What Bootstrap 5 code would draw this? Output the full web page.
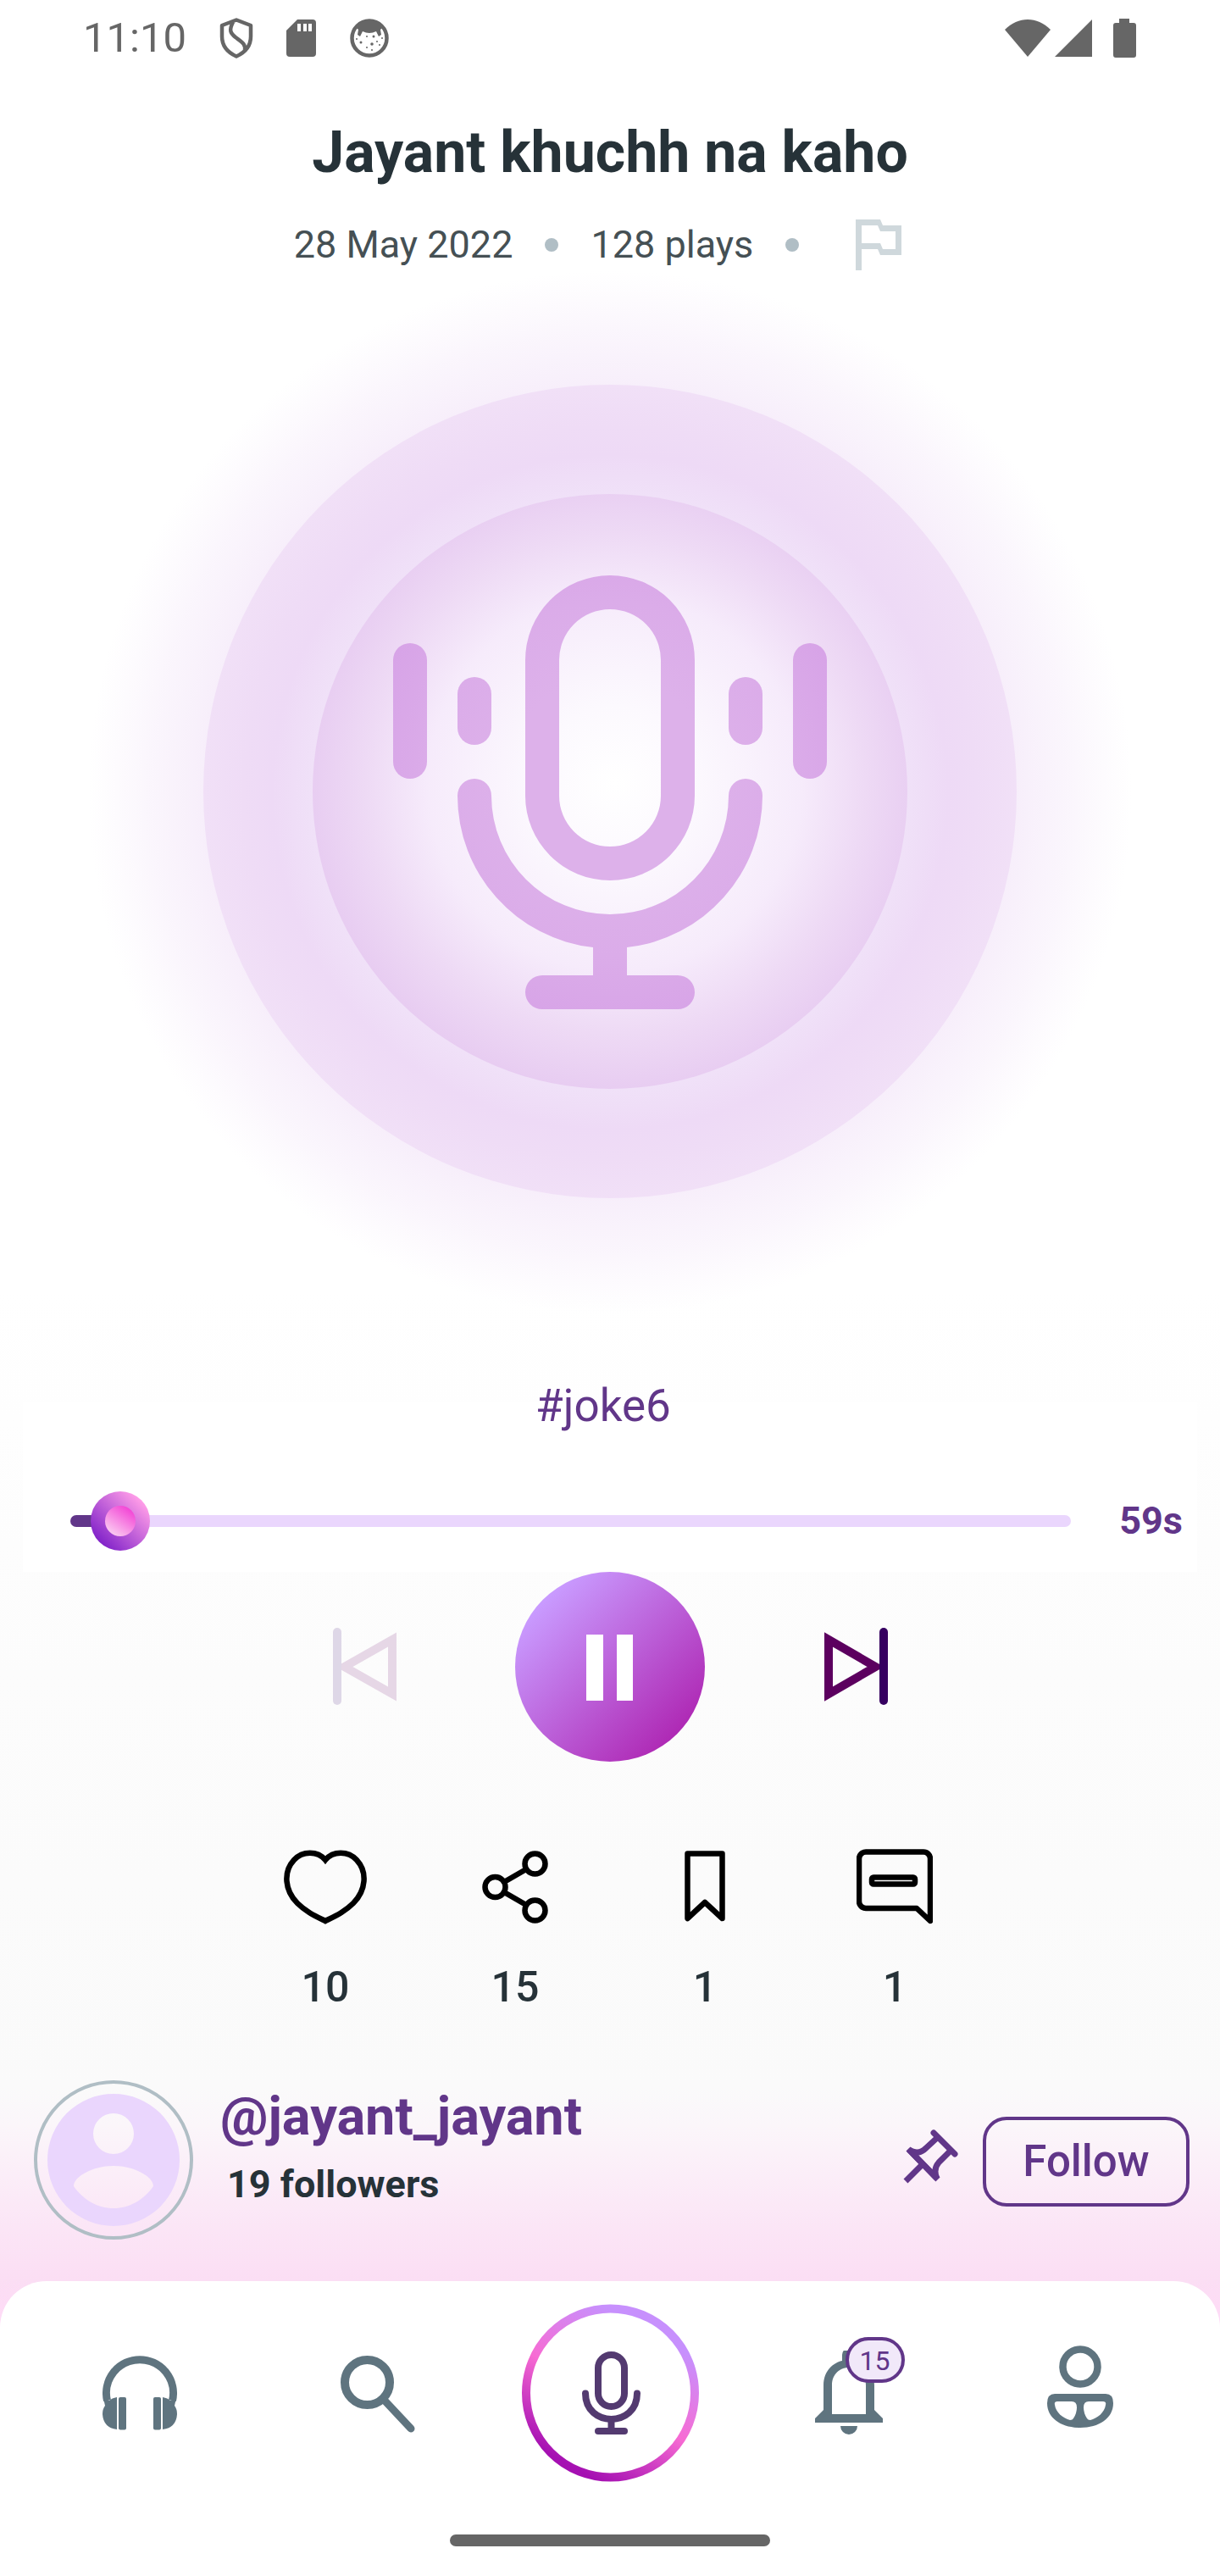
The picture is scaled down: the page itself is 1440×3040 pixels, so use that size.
<!DOCTYPE html>
<html lang="en">
<head>
<meta charset="utf-8">
<meta name="viewport" content="width=device-width, initial-scale=1">
<title>Jayant khuchh na kaho</title>
<link href="https://cdn.jsdelivr.net/npm/bootstrap@5.3.0/dist/css/bootstrap.min.css" rel="stylesheet">
<style>
  :root { --violet: #613689; --ink: #263238; --slate: #5f747f; --lilac: #ead6fd; --status: #666; }
  body {
    font-family: Roboto, "Liberation Sans", sans-serif;
    color: var(--ink);
    background: linear-gradient(#fff 0, #fff 50%, #fcfcfc 65%, #fafafa 81%, #fbf6fa 82.5%, #fbe9f7 85.5%, #fbdef4 88.5%, #ffdaf7 90.5%) #fff;
  }
  svg { display: block; flex: none; }
  .icon-btn { background: none; border: 0; padding: 0; color: inherit; display: block; }
  .status-bar { height: 90px; padding: 0 98px 0 98px; color: var(--status); font-size: 49px; line-height: 60px; }
  .status-icons { gap: 39px; }
  .signal-icons { gap: 5px; }
  .track-title { font-size: 68px; line-height: 80px; font-weight: 700; margin: 50px 0 39px; }
  .track-meta { font-size: 45px; line-height: 60px; gap: 38px; color: #455054; }
  .dot { width: 16px; height: 16px; border-radius: 50%; background: #b0bec5; }
  .flag-btn { width: 112px; }
  .artwork { max-width: 1232px; }
  .player { margin: 76px 27px 0; background: linear-gradient(transparent 28px, #fff 28px); }
  .hashtag { font-size: 53px; line-height: 64px; color: var(--violet); text-decoration: none; }
  .seek-row { gap: 57px; padding: 69px 17px 25px 56px; }
  .seek { appearance: none; -webkit-appearance: none; height: 70px; margin: 0; background: none; min-width: 0; }
  .seek::-webkit-slider-runnable-track {
    height: 14px; border-radius: 7px;
    background: linear-gradient(90deg, var(--violet) var(--played), var(--lilac) var(--played));
  }
  .seek::-webkit-slider-thumb {
    -webkit-appearance: none; width: 70px; height: 70px; margin-top: -28px; padding: 17px; border: 0; border-radius: 50%;
    background: linear-gradient(35deg, #fbd0f2 10%, #f348d6 85%) content-box, linear-gradient(45deg, #7d1fc8 12%, #ff9de8 85%) border-box;
  }
  .time-left { font-size: 45px; line-height: 60px; font-weight: 700; color: var(--violet); }
  .controls { gap: 140px; }
  .play-btn { width: 224px; height: 224px; border-radius: 50%; background: linear-gradient(135deg, #c99bff 15%, #ad22b0 90%); }
  .actions { margin-top: 100px; }
  .action { width: 224px; font-size: 50px; line-height: 60px; font-weight: 500; gap: 40px; }
  .author { margin-top: 80px; padding: 0 36px 0 40px; gap: 32px; }
  .avatar { width: 188px; height: 188px; border: 4px solid #b0bec5; border-radius: 50%; }
  .handle { font-size: 63px; line-height: 72px; font-weight: 700; color: var(--violet); text-decoration: none; margin-bottom: 14px; }
  .followers { font-size: 45px; line-height: 60px; font-weight: 700; }
  .author-text { padding-bottom: 28px; }
  .pin-btn { color: var(--violet); margin-bottom: 12px; }
  .follow-btn { width: 244px; height: 106px; border: 4px solid var(--violet); border-radius: 28px; font-size: 51px; font-weight: 500; color: var(--violet); background: none; }
  .author-tools { gap: 27px; padding-top: 4px; }
  .tab-bar { margin-top: 49px; padding: 27px 28px 35px; background: #fff; border-radius: 55px 55px 0 0; }
  .tab-bar a { color: var(--slate); }
  .tab-badge { position: absolute; left: 36px; top: -16px; width: 70px; height: 54px; border: 4px solid var(--violet); border-radius: 27px; background: #f1e8f9; color: var(--violet); font-size: 32px; line-height: 48px; text-align: center; }
  .home-pill { width: 378px; height: 14px; border-radius: 7px; background: var(--status); margin: 62px auto 0; }
</style>
</head>
<body>
<div class="d-flex flex-column min-vh-100">

  <div class="status-bar d-flex align-items-center justify-content-between">
    <div class="status-icons d-flex align-items-center">
      <span>11:10</span>
      <svg width="40" height="48" viewBox="0 0 40 48" fill="none" stroke="currentColor" stroke-width="4.5" stroke-linejoin="round"><path d="M20 2.500 37 9V22C37 33 30 41 20 45.500C10 41 3 33 3 22V9Z"/><path d="M16 5C11 15 13 18 19 23C27 29 31 31 30 38"/></svg>
      <svg width="36" height="45" viewBox="0 0 36 45"><path fill="currentColor" d="M13 0H31a4 4 0 0 1 4 4V40a4 4 0 0 1-4 4H4a4 4 0 0 1-4-4V13Z"/><path fill="#fff" d="M13 5h4v9h-4zM20 5h4v9h-4zM26 5h4v9h-4z"/></svg>
      <svg width="46" height="46" viewBox="0 0 46 46"><circle cx="23" cy="23" r="20.500" fill="none" stroke="currentColor" stroke-width="4.500"/><path fill="currentColor" d="M6 9C14-1 32-1 40 9L36 13 37 19 34 21 31 15Q23 19 15 15L12 21 9 19 10 13Z"/><g fill="currentColor"><circle cx="8" cy="24" r="1"/><circle cx="13" cy="28" r="1.500"/><circle cx="20" cy="21" r="1"/><circle cx="28" cy="21" r="1.500"/><circle cx="26" cy="30" r="1.800"/><circle cx="20" cy="34" r="1"/><circle cx="32" cy="27" r="1"/><circle cx="35" cy="31" r="1"/><circle cx="26" cy="37" r="1"/><circle cx="38" cy="23" r="1"/></g></svg>
    </div>
    <div class="signal-icons d-flex align-items-center">
      <svg width="54" height="44" viewBox="0 0 54 44" fill="currentColor"><path d="M0 12C16-4 38-4 54 12L27 44Z"/></svg>
      <svg width="44" height="44" viewBox="0 0 44 44" fill="currentColor"><path d="M44 0V44H0Z"/></svg>
      <svg class="ms-3" width="32" height="46" viewBox="0 0 32 46" fill="currentColor"><path d="M11 0H23V5H28a3 3 0 0 1 3 3V43a3 3 0 0 1-3 3H7a3 3 0 0 1-3-3V8a3 3 0 0 1 3-3H11Z"/></svg>
    </div>
  </div>

  <main>
    <h1 class="track-title text-center">Jayant khuchh na kaho</h1>
    <div class="track-meta d-flex align-items-center justify-content-center">
      <span>28 May 2022</span>
      <span class="dot"></span>
      <span>128 plays</span>
      <span class="dot"></span>
      <button class="icon-btn flag-btn" type="button" aria-label="Report">
        <svg class="mx-auto" width="54" height="60" viewBox="0 0 54 60"><path fill="#cfd8dc" fill-rule="evenodd" d="M0 0H29L32 7H54V42H29L26 35H7V60H0ZM7 7V28H29L32 35H47V14H29L26 7Z"/></svg>
      </button>
    </div>

    <svg class="artwork mx-auto w-100 h-auto" viewBox="0 0 1232 1232" role="img" aria-label="Microphone">
      <defs>
        <radialGradient id="glow" gradientUnits="userSpaceOnUse" cx="616" cy="616" r="616">
          <stop offset=".56" stop-color="#d8abe9" stop-opacity=".36"/><stop offset=".7" stop-color="#d8abe9" stop-opacity=".26"/><stop offset=".78" stop-color="#dbb4eb" stop-opacity=".22"/><stop offset=".88" stop-color="#dfbcee" stop-opacity=".14"/><stop offset="1" stop-color="#e3c4f0" stop-opacity="0"/>
        </radialGradient>
        <radialGradient id="ring" gradientUnits="userSpaceOnUse" cx="616" cy="616" r="480">
          <stop offset=".73" stop-color="#f0e1f8"/><stop offset=".83" stop-color="#eedaf6"/><stop offset=".9" stop-color="#efdcf6"/><stop offset="1" stop-color="#f1e0f7"/>
        </radialGradient>
        <radialGradient id="disc" gradientUnits="userSpaceOnUse" cx="622" cy="606" r="368">
          <stop offset="0" stop-color="#fff"/><stop offset=".25" stop-color="#fcf9fe"/><stop offset=".6" stop-color="#f6ebfb"/><stop offset=".8" stop-color="#eedaf5"/><stop offset="1" stop-color="#e7cbf1"/>
        </radialGradient>
        <radialGradient id="mic" gradientUnits="userSpaceOnUse" cx="616" cy="600" r="300">
          <stop offset=".4" stop-color="#ddb1ea"/><stop offset=".7" stop-color="#dbace9"/><stop offset="1" stop-color="#d7a3e7"/>
        </radialGradient>
      </defs>
      <circle cx="616" cy="616" r="616" fill="url(#glow)"/>
      <circle cx="616" cy="615" r="480" fill="url(#ring)"/>
      <circle cx="616" cy="615" r="351" fill="url(#disc)"/>
      <g fill="url(#mic)">
        <path fill-rule="evenodd" d="M516 460a100 100 0 0 1 200 0V620a100 100 0 0 1-200 0ZM556 460V620a60 60 0 0 0 120 0V460a60 60 0 0 0-120 0Z"/>
        <rect x="360" y="440" width="40" height="160" rx="20"/>
        <rect x="832" y="440" width="40" height="160" rx="20"/>
        <rect x="436" y="480" width="40" height="80" rx="20"/>
        <rect x="756" y="480" width="40" height="80" rx="20"/>
        <path d="M436 620a20 20 0 0 1 40 0a140 140 0 0 0 280 0a20 20 0 0 1 40 0A180 180 0 0 1 636 799V832H696a20 20 0 0 1 0 40H536a20 20 0 0 1 0-40H596V799A180 180 0 0 1 436 620Z"/>
      </g>
    </svg>

    <section class="player">
      <div class="text-center pe-3"><a class="hashtag" href="#joke6">#joke6</a></div>
      <div class="seek-row d-flex align-items-center">
        <input class="seek flex-grow-1" type="range" min="0" max="60" step="0.1" value="1.300" aria-label="Playback position" style="--played: 4.8%">
        <span class="time-left">59s</span>
      </div>
    </section>

    <div class="controls d-flex justify-content-center align-items-center">
      <button class="icon-btn" type="button" aria-label="Previous">
        <svg width="76" height="92" viewBox="0 0 76 92"><path d="M14.500 46 71 14V78Z" fill="none" stroke="#e6d7e6" stroke-width="10"/><rect x="1" y="0" width="10" height="91" rx="5" fill="#ded7e7"/></svg>
      </button>
      <button class="icon-btn play-btn" type="button" aria-label="Pause">
        <svg class="mx-auto" width="56" height="80" viewBox="0 -2 56 80" fill="#fff"><path d="M0 0H20V78H0ZM36 0H55V78H36Z"/></svg>
      </button>
      <button class="icon-btn" type="button" aria-label="Next">
        <svg width="76" height="92" viewBox="0 0 76 92"><path d="M61.500 46 6 14V78Z" fill="none" stroke="#5c005f" stroke-width="10"/><rect x="66" y="0" width="10" height="91" rx="5" fill="#360060"/></svg>
      </button>
    </div>

    <div class="actions d-flex justify-content-center">
      <button class="icon-btn action d-flex flex-column align-items-center" type="button" aria-label="Like">
        <svg width="100" height="96" viewBox="0 0 100 96" fill="none" stroke="#000" stroke-width="6.500"><path d="M50 16C59 5 77 5 87 16C100 30 98 52 83 67C73 77 62 82 50 88C38 82 27 77 17 67C2 52 0 30 13 16C23 5 41 5 50 16Z"/></svg>
        <span>10</span>
      </button>
      <button class="icon-btn action d-flex flex-column align-items-center" type="button" aria-label="Share">
        <svg width="80" height="96" viewBox="0 0 80 96" fill="none" stroke="#000" stroke-width="6.500"><circle cx="16.500" cy="48" r="12"/><circle cx="63.500" cy="20.500" r="12"/><circle cx="63.500" cy="75.500" r="12"/><path d="M27 42 53 27M27 54 53 69"/></svg>
        <span>15</span>
      </button>
      <button class="icon-btn action d-flex flex-column align-items-center" type="button" aria-label="Bookmark">
        <svg width="50" height="96" viewBox="0 0 50 96" fill="none" stroke="#000" stroke-width="6.500" stroke-linejoin="round"><path d="M4.500 8.500H45.500V85L25 66 4.500 85Z"/></svg>
        <span>1</span>
      </button>
      <button class="icon-btn action d-flex flex-column align-items-center" type="button" aria-label="Comments">
        <svg width="90" height="96" viewBox="0 0 90 96" fill="none" stroke="#000" stroke-width="6.500" stroke-linejoin="round"><path d="M11 6.500H79a8 8 0 0 1 8 8V88L71 73H11a8 8 0 0 1-8-8V14.500a8 8 0 0 1 8-8Z"/><rect x="18" y="36.500" width="51" height="8" rx="2"/></svg>
        <span>1</span>
      </button>
    </div>

    <section class="author d-flex align-items-center">
      <svg class="avatar" viewBox="0 0 180 180" role="img" aria-label="jayant_jayant"><path fill="#ead6fd" fill-rule="evenodd" d="M90 12a78 78 0 1 0 0 156a78 78 0 1 0 0-156ZM90 35a24 24 0 1 1 0 48a24 24 0 1 1 0-48ZM90 97C115 97 137 110 137 121C126 137 109 147 90 147C71 147 54 137 43 121C43 110 65 97 90 97Z"/></svg>
      <div class="author-text d-flex flex-column flex-grow-1">
        <a class="handle" href="#profile">@jayant_jayant</a>
        <span class="followers ps-2">19 followers</span>
      </div>
      <div class="author-tools d-flex align-items-center">
        <button class="icon-btn pin-btn" type="button" aria-label="Pin">
          <svg width="68" height="68" viewBox="16 18 68 68" fill="none" stroke="currentColor" stroke-width="7"><path stroke-linecap="round" d="M53 24 78 49"/><path d="M57 30 44 42Q35 51 24 44L57 78Q52 67 59 59L72 46"/><path d="M23 43 58 79M39 62 20 81"/></svg>
        </button>
        <button class="follow-btn" type="button">Follow</button>
      </div>
    </section>
  </main>

  <nav class="tab-bar flex-grow-1">
    <div class="d-flex align-items-center">
      <a class="col d-flex justify-content-center" href="#listen" aria-label="Listen">
        <svg width="88" height="88" viewBox="0 0 88 88" fill="currentColor"><path d="M5.500 53A39.500 39.500 0 1 1 82.500 53" fill="none" stroke="currentColor" stroke-width="9"/><path d="M17 49Q11 50 8 53L1 50 3 59Q0 63 0 69Q1 85 17 87ZM71 49Q77 50 80 53L87 50 85 59Q88 63 88 69Q87 85 71 87Z"/><rect x="19" y="49" width="9" height="38.500" rx="2"/><rect x="60" y="49" width="9" height="38.500" rx="2"/></svg>
      </a>
      <a class="col d-flex justify-content-center ps-2" href="#search" aria-label="Search">
        <svg width="88" height="94" viewBox="0 -3 88 94" fill="none" stroke="currentColor"><circle cx="31.500" cy="31.500" r="26.500" stroke-width="10"/><path d="M53 54 83 86" stroke-width="9" stroke-linecap="round"/></svg>
      </a>
      <a class="col d-flex justify-content-center" href="#record" aria-label="Record">
        <svg width="210" height="210" viewBox="0 0 210 210" fill="none">
          <defs><linearGradient id="recordRing" x1=".75" y1=".15" x2=".3" y2=".95"><stop offset="0" stop-color="#c790fd"/><stop offset=".5" stop-color="#f76bd3"/><stop offset="1" stop-color="#a510b2"/></linearGradient></defs>
          <circle cx="105.500" cy="105" r="99.500" stroke="url(#recordRing)" stroke-width="10"/>
          <g stroke="#533a70" stroke-width="8"><rect x="91" y="60" width="31" height="61" rx="15.500"/><path stroke-linecap="round" d="M76 105.500C76 146 137 146 137 105.500"/><path d="M106.500 136V148"/><path stroke-linecap="round" d="M91 150H122"/></g>
        </svg>
      </a>
      <a class="col d-flex justify-content-center ps-2" href="#alerts" aria-label="Notifications">
        <span class="position-relative">
          <svg width="80" height="100" viewBox="0 -1 80 100" fill="currentColor"><path d="M32 4a8 8 0 0 1 16 0V12L32 12Z"/><path fill-rule="evenodd" d="M10 69V40C10 21 24 10 40 10C56 10 70 21 70 40V69L80 79V84H0V79ZM20 74H60V40C60 26 50 19 40 19C30 19 20 26 20 40ZM30 88H50A10 10 0 0 1 30 88Z"/></svg>
          <span class="tab-badge">15</span>
        </span>
      </a>
      <a class="col d-flex justify-content-center" href="#account" aria-label="Account">
        <svg width="78" height="112" viewBox="0 0 78 112" fill="currentColor"><circle cx="39" cy="25" r="20.500" fill="none" stroke="currentColor" stroke-width="8.500"/><path fill-rule="evenodd" d="M9 57H69Q78 57 78 68C78 86 61 97 39 97C17 97 0 86 0 68Q0 57 9 57ZM12 66Q8 66 9 70C10 79 19 86 27 88Q30 88 31 86Q35 80 35 73Q35 66 29 66ZM66 66Q70 66 69 70C68 79 59 86 51 88Q48 88 47 86Q43 80 43 73Q43 66 49 66Z"/></svg>
      </a>
    </div>
    <div class="home-pill"></div>
  </nav>
</div>
<script src="https://cdn.jsdelivr.net/npm/bootstrap@5.3.0/dist/js/bootstrap.bundle.min.js"></script>
</body>
</html>
